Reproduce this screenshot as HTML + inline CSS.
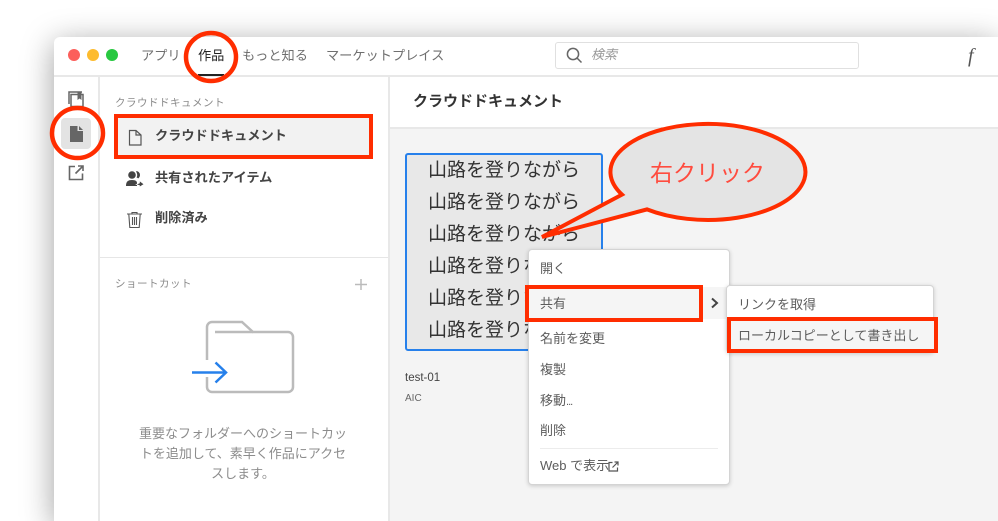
<!DOCTYPE html>
<html lang="ja"><head><meta charset="utf-8"><title>Creative Cloud</title>
<style>
html,body{margin:0;padding:0;background:#fff;width:998px;height:521px;overflow:hidden}
body{position:relative;font-family:"Liberation Sans","Noto Sans CJK JP",sans-serif}
#root{position:absolute;left:0;top:0;width:998px;height:521px;overflow:hidden;filter:blur(.35px)}
.a{position:absolute}
.t{position:absolute;white-space:nowrap;line-height:20px;height:20px}
#win{left:54px;top:37px;width:944px;height:484px;background:#fff;border-radius:6px 0 0 0;box-shadow:0 6px 32px rgba(0,0,0,.38)}
.m{font-size:13px;color:#5c5c5c}
.s{font-size:13.2px;color:#444;font-weight:bold}
.y{font-size:19px;color:#333;left:428px}
</style></head><body><div id="root">
<div id="win" class="a"></div>
<div class="a" style="left:54px;top:75px;width:944px;height:2px;background:#e8e8e8"></div>
<div class="a" style="left:98px;top:77px;width:2px;height:444px;background:#e8e8e8"></div>
<div class="a" style="left:388px;top:77px;width:2px;height:444px;background:#e8e8e8"></div>
<div class="a" style="left:390px;top:129px;width:608px;height:392px;background:#f4f4f4"></div>
<div class="a" style="left:390px;top:127px;width:608px;height:2px;background:#e8e8e8"></div>
<div class="a" style="left:100px;top:257px;width:288px;height:1px;background:#e6e6e6"></div>

<div class="a" style="left:68px;top:49px;width:12px;height:12px;border-radius:50%;background:#fc5f5b"></div>
<div class="a" style="left:87px;top:49px;width:12px;height:12px;border-radius:50%;background:#fdbb2e"></div>
<div class="a" style="left:106px;top:49px;width:12px;height:12px;border-radius:50%;background:#28c840"></div>

<div class="t" style="left:141px;top:46px;font-size:13.2px;color:#6f6f6f">アプリ</div>
<div class="t" style="left:198px;top:46px;font-size:13.2px;color:#222">作品</div>
<div class="a" style="left:198px;top:74px;width:26px;height:2px;background:#222"></div>
<div class="t" style="left:242px;top:46px;font-size:13.2px;color:#6f6f6f">もっと知る</div>
<div class="t" style="left:326px;top:46px;font-size:13.2px;color:#6f6f6f">マーケットプレイス</div>

<div class="a" style="left:555px;top:42px;width:302px;height:25px;border:1px solid #e0e0e0;border-radius:3px;background:#fff"></div>
<svg class="a" style="left:564px;top:45px" width="20" height="20" fill="none" stroke="#666" stroke-width="1.5"><circle cx="9" cy="9" r="5.6"/><path d="M13 13l4.500 4.500"/></svg>
<div class="t" style="left:591px;top:45px;font-size:13px;color:#999;font-style:italic">検索</div>
<div class="t" style="left:968px;top:46px;font-size:20px;color:#555;font-style:italic;font-family:'Liberation Serif',serif">f</div>

<!-- rail icons -->
<svg class="a" style="left:66px;top:90px" width="20" height="20" fill="none" stroke="#666" stroke-width="1.5"><path d="M3 14V2h13"/><path d="M5 16.500V4.500h12v12z"/><path d="M11.500 2h4v8l-2-1.500-2 1.500z" fill="#666" stroke="none"/></svg>
<div class="a" style="left:61px;top:118px;width:30px;height:31px;border-radius:4px;background:#e3e3e3"></div>
<svg class="a" style="left:69px;top:125px" width="16" height="18"><path d="M1 1h7.500v5H14V17H1zM10 1l4 4h-4z" fill="#666"/></svg>
<svg class="a" style="left:67px;top:164px" width="18" height="17" fill="none" stroke="#666" stroke-width="1.600"><path d="M8 2.500H2.500v13h13v-6"/><path d="M8.500 9.500L15.500 2.500M11 2h5v5"/></svg>

<!-- sidebar -->
<div class="t" style="left:115px;top:93px;font-size:10.500px;letter-spacing:.5px;color:#8a8a8a">クラウドドキュメント</div>
<div class="a" style="left:114px;top:114px;width:259px;height:45px;box-sizing:border-box;background:#f2f2f2;border:4.500px solid #ff2d00"></div>
<svg class="a" style="left:127px;top:128px" width="16" height="19" fill="none" stroke="#555" stroke-width="1.200"><path d="M2.500 2.500h6.500L14 7v10H2.500z"/><path d="M9 2.500V7h5"/></svg>
<div class="t s" style="left:155px;top:126px">クラウドドキュメント</div>
<svg class="a" style="left:125px;top:170px" width="20" height="17" fill="#444"><circle cx="7" cy="5" r="3.800"/><path d="M11 1.200a3.500 3.800 0 0 1 4 3.800c0 1.500-1 3-2 3.500 0-.5-1-1-1.500-1 1-1.500 1-3.500-.5-6.300z"/><path d="M1 16c0-4.500 2-6 6-6s5 1.500 5 3v3z"/><path d="M11 14.500l3.500-1.500v-2.200l4.500 3.500-4.500 2.700v-1.500z" stroke="#fff" stroke-width=".6"/></svg>
<div class="t s" style="left:155px;top:168px">共有されたアイテム</div>
<svg class="a" style="left:126px;top:211px" width="17" height="18" fill="none" stroke="#555" stroke-width="1.100"><path d="M1 3h15M6 3V1.500h5V3M2.800 3l1 13.500h9.400l1-13.500M6.500 6v8M8.500 6v8M10.500 6v8"/></svg>
<div class="t s" style="left:155px;top:208px">削除済み</div>

<div class="t" style="left:115px;top:274px;font-size:10.500px;letter-spacing:.5px;color:#8a8a8a">ショートカット</div>
<svg class="a" style="left:354px;top:278px" width="14" height="13" stroke="#bbb" stroke-width="1.500"><path d="M1 6.500h12M7 1v11"/></svg>
<svg class="a" style="left:190px;top:318px" width="110" height="80" fill="none"><path d="M17 42V9a5 5 0 0 1 5-5h30l11 10h35a5 5 0 0 1 5 5v50a5 5 0 0 1-5 5H22a5 5 0 0 1-5-5V59" stroke="#bbb" stroke-width="2.500"/><path d="M25 14h38" stroke="#bbb" stroke-width="2.500"/><path d="M2 54.500h34M25.500 44.500L36 54.500 25.500 64.500" stroke="#2680eb" stroke-width="2.500"/></svg>
<div class="t" style="left:115px;top:424px;width:256px;text-align:center;font-size:13px;color:#8c8c8c">重要なフォルダーへのショートカッ</div>
<div class="t" style="left:115px;top:444px;width:256px;text-align:center;font-size:13px;color:#8c8c8c">トを追加して、素早く作品にアクセ</div>
<div class="t" style="left:115px;top:464px;width:256px;text-align:center;font-size:13px;color:#8c8c8c">スします。</div>

<!-- content -->
<div class="t" style="left:413px;top:92px;font-size:15px;font-weight:bold;color:#333">クラウドドキュメント</div>
<div class="a" style="left:405px;top:153px;width:194px;height:194px;background:#e8e8e8;border:2px solid #2680eb;border-radius:3px"></div>
<div class="t y" style="top:161px">山路を登りながら</div>
<div class="t y" style="top:193px">山路を登りながら</div>
<div class="t y" style="top:225px">山路を登りながら</div>
<div class="t y" style="top:257px">山路を登りながら</div>
<div class="t y" style="top:289px">山路を登りながら</div>
<div class="t y" style="top:321px">山路を登りながら</div>
<div class="t" style="left:405px;top:368px;font-size:11.500px;color:#444">test-01</div>
<div class="t" style="left:405px;top:389px;font-size:10px;color:#666">AIC</div>

<!-- balloon -->
<svg class="a" style="left:530px;top:115px" width="290" height="135"><path d="M92 79.600A97.500 48 0 1 1 117 94.400L12 122z" fill="#e4e4e4" stroke="#ff2d00" stroke-width="4" stroke-linejoin="miter"/></svg>
<div class="t" style="left:650px;top:163px;font-size:23px;color:#ff4c3f">右クリック</div>

<!-- menu -->
<div class="a" style="left:528px;top:249px;width:202px;height:236px;background:#fff;border:1px solid #d4d4d4;border-radius:4px;box-sizing:border-box;box-shadow:0 1px 4px rgba(0,0,0,.18)"></div>
<div class="a" style="left:529px;top:287px;width:197px;height:32px;background:#f5f5f5"></div>
<div class="t m" style="left:540px;top:259px">開く</div>
<div class="t m" style="left:540px;top:294px">共有</div>
<div class="t m" style="left:540px;top:329px">名前を変更</div>
<div class="t m" style="left:540px;top:360px">複製</div>
<div class="t m" style="left:540px;top:391px">移動<span style="letter-spacing:-1px;font-size:11px">...</span></div>
<div class="t m" style="left:540px;top:421px">削除</div>
<div class="a" style="left:540px;top:448px;width:178px;height:1px;background:#ececec"></div>
<div class="t m" style="left:540px;top:456px">Web で表示</div>
<svg class="a" style="left:608px;top:461px" width="11" height="11" fill="none" stroke="#555" stroke-width="1.200"><path d="M4.500 1.500h-3.500v8.500h8.500V6.500"/><path d="M4.500 6.500L9.500 1.500M6.500 1h3.500v3.500"/></svg>
<svg class="a" style="left:710px;top:297px" width="10" height="12" fill="none" stroke="#444" stroke-width="2"><path d="M2 1.500L7 6 2 10.500"/></svg>
<div class="a" style="left:525px;top:285px;width:178px;height:37px;box-sizing:border-box;border:4.500px solid #ff2d00"></div>

<!-- submenu -->
<div class="a" style="left:726px;top:285px;width:208px;height:68px;background:#fff;border:1px solid #d4d4d4;border-radius:4px;box-sizing:border-box;box-shadow:0 1px 4px rgba(0,0,0,.18)"></div>
<div class="t m" style="left:738px;top:295px">リンクを取得</div>
<div class="a" style="left:727px;top:317px;width:211px;height:36px;box-sizing:border-box;background:#f5f5f5;border:4.500px solid #ff2d00"></div>
<div class="t m" style="left:738px;top:326px">ローカルコピーとして書き出し</div>

<!-- circles -->
<svg class="a" style="left:0;top:0;pointer-events:none" width="998" height="521" fill="none" stroke="#ff2d00" stroke-width="4.500"><ellipse cx="211" cy="57" rx="25" ry="24"/><ellipse cx="77.500" cy="133" rx="25.500" ry="25"/></svg>
</div></body></html>
